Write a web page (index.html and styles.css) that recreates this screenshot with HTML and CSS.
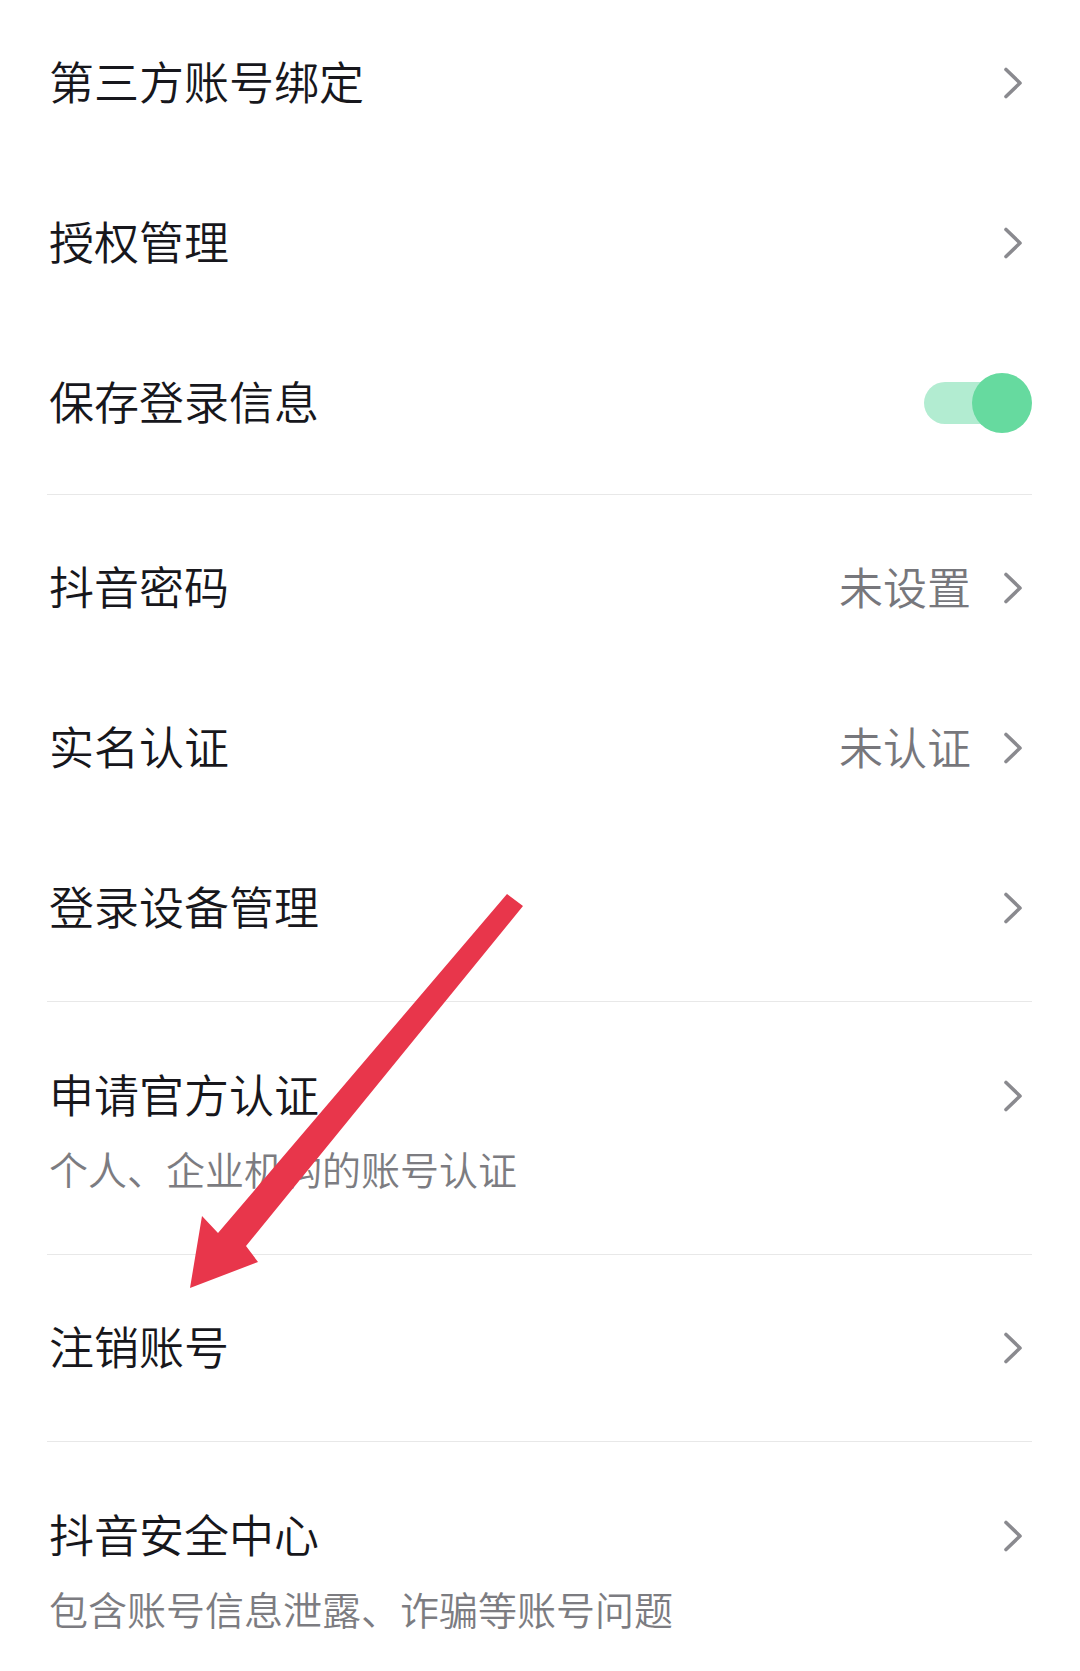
FILE: index.html
```html
<!DOCTYPE html>
<html lang="zh-CN">
<head>
	<meta charset="utf-8">
	<title>账号与安全</title>
<link rel="stylesheet" href="styles.css">
</head>
<body>
<div class="page">

	<div class="group first">
		<div class="row">
			<span class="label">第三方账号绑定</span>
			<svg class="chev" viewBox="0 0 30 34"><path d="M4 3.5 L18 17 L4 30.5"/></svg>
		</div>
		<div class="row">
			<span class="label">授权管理</span>
			<svg class="chev" viewBox="0 0 30 34"><path d="M4 3.5 L18 17 L4 30.5"/></svg>
		</div>
		<div class="row">
			<span class="label">保存登录信息</span>
			<span class="toggle on"><span class="knob"></span></span>
		</div>
	</div>

	<div class="group">
		<div class="row">
			<span class="label">抖音密码</span>
			<span class="value">未设置</span>
			<svg class="chev" viewBox="0 0 30 34"><path d="M4 3.5 L18 17 L4 30.5"/></svg>
		</div>
		<div class="row">
			<span class="label">实名认证</span>
			<span class="value">未认证</span>
			<svg class="chev" viewBox="0 0 30 34"><path d="M4 3.5 L18 17 L4 30.5"/></svg>
		</div>
		<div class="row">
			<span class="label">登录设备管理</span>
			<svg class="chev" viewBox="0 0 30 34"><path d="M4 3.5 L18 17 L4 30.5"/></svg>
		</div>
	</div>

	<div class="group">
		<div class="row-two">
			<div class="row-main">
				<span class="label">申请官方认证</span>
				<svg class="chev" viewBox="0 0 30 34"><path d="M4 3.5 L18 17 L4 30.5"/></svg>
			</div>
			<div class="desc">个人、企业机构的账号认证</div>
		</div>
	</div>

	<div class="group">
		<div class="row">
			<span class="label">注销账号</span>
			<svg class="chev" viewBox="0 0 30 34"><path d="M4 3.5 L18 17 L4 30.5"/></svg>
		</div>
	</div>

	<div class="group last">
		<div class="row-two">
			<div class="row-main">
				<span class="label">抖音安全中心</span>
				<svg class="chev" viewBox="0 0 30 34"><path d="M4 3.5 L18 17 L4 30.5"/></svg>
			</div>
			<div class="desc">包含账号信息泄露、诈骗等账号问题</div>
		</div>
	</div>

	<!-- red pointer drawn over the list -->
	<svg class="pointer" viewBox="0 0 1080 1671">
		<path d="M507 894 L523 906 L246 1246 L258 1262 L190 1288 L202 1216 L218 1233 Z"/>
	</svg>
</div>
</body>
</html>
```

FILE: styles.css
```css
body {
	margin: 0;
	background: #ffffff;
	font-family: "Noto Sans CJK SC", "Noto Sans", sans-serif;
	font-weight: 350;
	color: #17171c;
}
.page {
	position: relative;
	height: 1671px;
	overflow: hidden;
	padding: 0 48px 0 47px;
}
.group {
	padding: 13px 0;
	border-bottom: 1px solid #e8e8e8;
}
.group.first {
	padding-top: 3px;
	padding-bottom: 11px;
}
.group.last {
	border-bottom: none;
}
.row {
	display: flex;
	align-items: center;
	height: 160px;
}
.label {
	flex: 1;
	margin-left: 2px;
	padding-bottom: 4px;
	font-size: 45px;
	line-height: 60px;
}
.value {
	padding-bottom: 4px;
	font-size: 44px;
	line-height: 60px;
	color: #77777c;
	margin-right: 31px;
}
.chev {
	width: 30px;
	height: 34px;
	fill: none;
	stroke: #8a8a8f;
	stroke-width: 3.6;
	stroke-linecap: round;
	stroke-linejoin: round;
}
.row-two {
	padding: 51px 0 48px;
}
.row-main {
	display: flex;
	align-items: center;
	height: 60px;
}
.desc {
	margin: 17px 0 0 2px;
	font-size: 39px;
	line-height: 50px;
	color: #7c7c81;
}
.toggle {
	position: relative;
	width: 108px;
	height: 60px;
	display: flex;
	align-items: center;
}
.toggle::before {
	content: "";
	display: block;
	width: 96px;
	height: 42px;
	border-radius: 21px;
	background: #b2ecd1;
}
.toggle .knob {
	position: absolute;
	right: 0;
	top: 0;
	width: 60px;
	height: 60px;
	border-radius: 50%;
	background: #66da9f;
}
.pointer {
	position: absolute;
	left: 0;
	top: 0;
	width: 1080px;
	height: 1671px;
	fill: #e8364b;
	pointer-events: none;
}
```
